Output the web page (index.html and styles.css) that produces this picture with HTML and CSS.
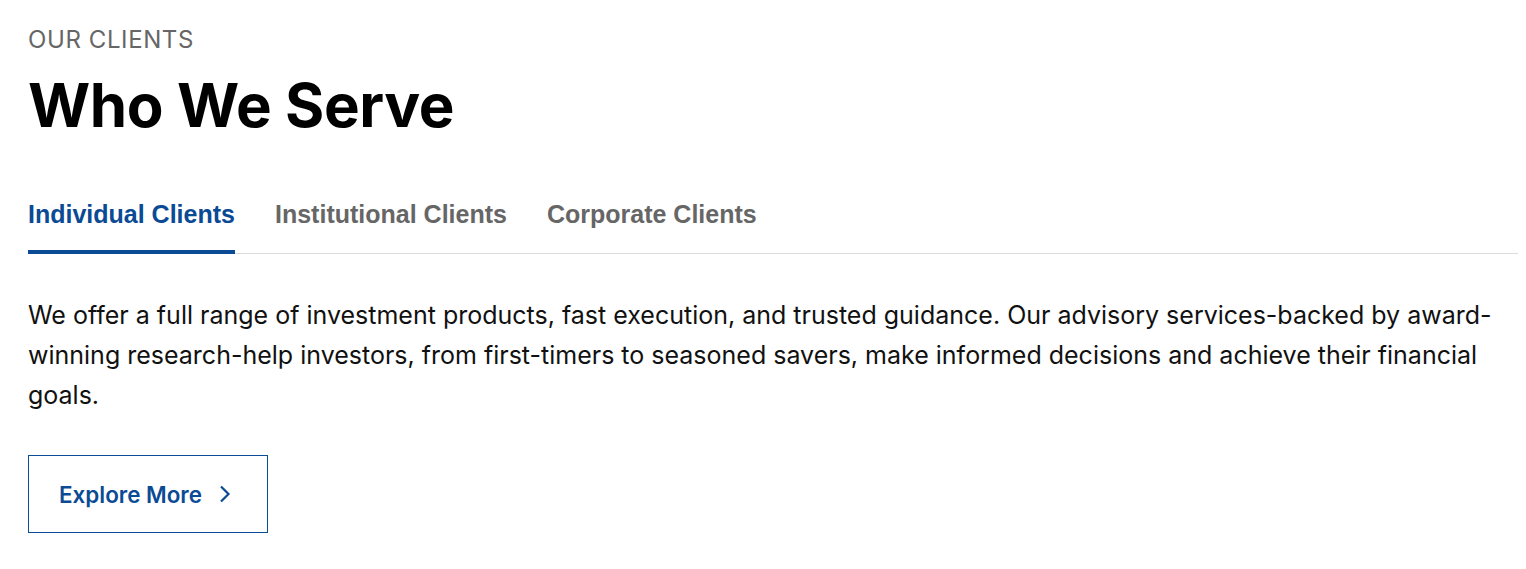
FILE: index.html
```html
<!DOCTYPE html>
<html>
<head>
<meta charset="utf-8">
<link rel="stylesheet" href="styles.css">
</head>
<body>
<section class="clients">
  <p class="eyebrow">OUR CLIENTS</p>
  <h1 class="title">Who We Serve</h1>
  <nav class="tabs">
    <a class="tab active">Individual Clients</a>
    <a class="tab">Institutional Clients</a>
    <a class="tab">Corporate Clients</a>
  </nav>
  <p class="desc">We offer a full range of investment products, fast execution, and trusted guidance. Our advisory services-backed by award-winning research-help investors, from first-timers to seasoned savers, make informed decisions and achieve their financial goals.</p>
  <a class="btn">Explore More
    <svg class="chev" width="14" height="22" viewBox="0 0 14 22"><path d="M3 3.5l7.5 7.5-7.5 7.5" fill="none" stroke="currentColor" stroke-width="2.2"/></svg>
  </a>
</section>
</body>
</html>
```
FILE: styles.css
```css
* { box-sizing: border-box; }
body { margin: 0; background: #fff; font-family: Inter, "Noto Sans", sans-serif; color: #111; }
.clients { padding: 25px 8px 30px 28px; display: flex; flex-direction: column; align-items: flex-start; }
.eyebrow { margin: 0; font-size: 24px; line-height: 30px; color: #666; font-weight: 400; letter-spacing: 0.6px; }
.title { margin: 12px 0 0; font-size: 60px; line-height: 76px; font-weight: 700; color: #000; letter-spacing: -0.4px; }
.tabs { margin-top: 56px; align-self: stretch; display: flex; gap: 40px; border-bottom: 1px solid #dcdcdc; }
.tab { font-family: "Liberation Sans", Arial, sans-serif; font-weight: 700; font-size: 25px; line-height: 30px; color: #666; padding-bottom: 21px; border-bottom: 4px solid transparent; margin-bottom: -1px; }
.tab.active { color: #0b4a94; border-bottom-color: #0b4a94; }
.desc { margin: 41px 0 0; font-size: 25px; line-height: 40px; color: #111; }
.btn { margin-top: 40px; display: flex; align-items: center; gap: 16px; width: 240px; height: 78px; padding-left: 30px; border: 1px solid #0b4a94; color: #0b4a94; font-size: 22.4px; font-weight: 600; }
.chev { display: block; }
```
